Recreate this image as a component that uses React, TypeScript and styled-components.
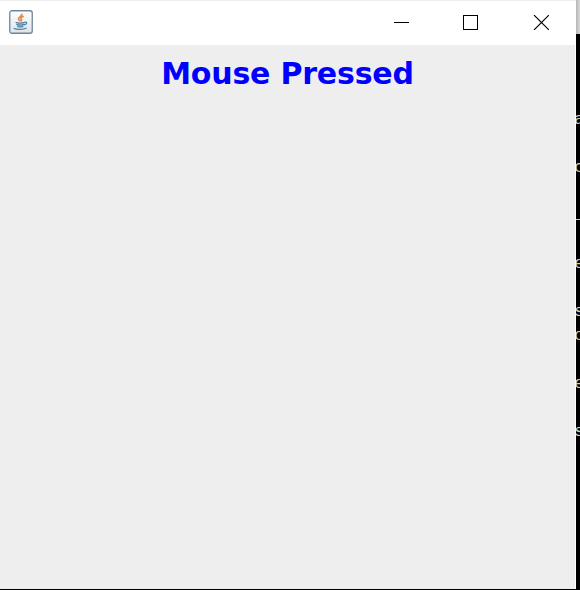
import React from "react";
import styled, { createGlobalStyle } from "styled-components";

const GlobalStyle = createGlobalStyle`
  html, body { margin: 0; overflow: hidden; }
`;

const Desktop = styled.div`
  display: flex;
  width: 580px;
  height: 590px;
  background: #000;
  overflow: hidden;
`;

const Frame = styled.main`
  display: flex;
  flex-direction: column;
  flex: none;
  box-sizing: border-box;
  width: 576px;
  height: 589px;
  border-top: 1px solid #ededed;
  border-right: 1px solid #fff;
  background: #eee;
`;

const TitleBar = styled.header`
  display: flex;
  justify-content: space-between;
  height: 44px;
  margin-right: -1px;
  padding-left: 9px;
  background: #fff;
`;

const JavaIcon = styled.svg`
  width: 24px;
  height: 24px;
  margin-top: 9px;
`;

const Controls = styled.div`
  display: flex;
  height: 43px;
`;

const ControlButton = styled.button<{ $width: number }>`
  display: flex;
  align-items: center;
  justify-content: center;
  width: ${({ $width }) => $width}px;
  height: 100%;
  padding: 0;
  border: 0;
  background: transparent;
`;

const Content = styled.section`
  display: flex;
  justify-content: center;
  flex: 1;
  padding-top: 11px;
`;

const Message = styled.h1`
  margin: 0;
  font: bold 30px/36px "DejaVu Sans", Verdana, sans-serif;
  letter-spacing: -0.2px;
  color: #00f;
  white-space: nowrap;
`;

const Backdrop = styled.aside`
  width: 4px;
  height: 590px;
  overflow: hidden;
`;

const BackdropHeader = styled.div`
  height: 34px;
  margin-bottom: 2px;
  background: linear-gradient(90deg, #b5b5b5, #d9d9d9);
`;

const ConsoleLine = styled.div<{ $raise: number }>`
  width: 4px;
  height: 24px;
  overflow: hidden;
  font: 17px/24px "Liberation Mono", monospace;
  text-indent: -2px;
  color: #d0d0c8;
  transform: translateY(${({ $raise }) => -$raise}px);
`;

const consoleLines = ["", "", "", "a", "", "c", "", "_", "", "e", "", "s", "o", "", "e", "", "s"];

export default function App() {
  return (
    <Desktop>
      <GlobalStyle />
      <Frame>
        <TitleBar>
          <JavaIcon viewBox="0 0 24 24" fill="none" aria-label="Java">
            <defs>
              <linearGradient id="tile" x1="0" y1="0" x2="0" y2="1">
                <stop stopColor="#ffffff" />
                <stop offset="1" stopColor="#dce4ea" />
              </linearGradient>
            </defs>
            <rect x=".75" y=".75" width="22.5" height="22.5" rx="2.2" fill="url(#tile)" stroke="#71859a" strokeWidth="1.3" />
            <path d="M12.7 3.6c1.4 2.4-3.8 3.3-3.2 5.4.3 1 1.5 1.5 1.7 2.4M14.8 6.3c-2.4.8-3.5 1.9-2.6 3 .6.8.4 1.5-.3 2" stroke="#e58a48" strokeWidth="1.7" />
            <path d="M6.6 12.3c2 .9 6.7.9 9.1 0l-.8 3.8c-1.8.9-5.2.9-6.8 0z" fill="#c5d6e2" />
            <path d="M6.6 12.2c2.3.9 6.7.9 9.2 0M7.4 14.4c2 .8 5.4.8 7.8 0M8.2 16.4c2 .7 4.4.7 6.2 0M15.7 12.2c2.9-.8 2.5 2-.8 2.8M4.7 18.3c2.8 1.6 10 1.5 12.8-.2" stroke="#4f7fa5" strokeWidth="1.2" />
          </JavaIcon>
          <Controls>
            <ControlButton $width={69} aria-label="Minimize">
              <svg width="15" height="15" shapeRendering="crispEdges"><path d="M0 7.5h15" stroke="#000" /></svg>
            </ControlButton>
            <ControlButton $width={69} aria-label="Maximize">
              <svg width="15" height="15" shapeRendering="crispEdges"><path d="M.5.5h14v14H.5z" fill="none" stroke="#000" /></svg>
            </ControlButton>
            <ControlButton $width={71} aria-label="Close">
              <svg width="17" height="15" viewBox="-2 0 17 15"><path d="m0 0 15 15M15 0 0 15" stroke="#000" strokeWidth="1.1" /></svg>
            </ControlButton>
          </Controls>
        </TitleBar>
        <Content><Message>Mouse Pressed</Message></Content>
      </Frame>
      <Backdrop>
        <BackdropHeader />
        {consoleLines.map((line, index) => (
          <ConsoleLine key={index} $raise={line === "_" ? 2 : 0}>{line}</ConsoleLine>
        ))}
      </Backdrop>
    </Desktop>
  );
}
